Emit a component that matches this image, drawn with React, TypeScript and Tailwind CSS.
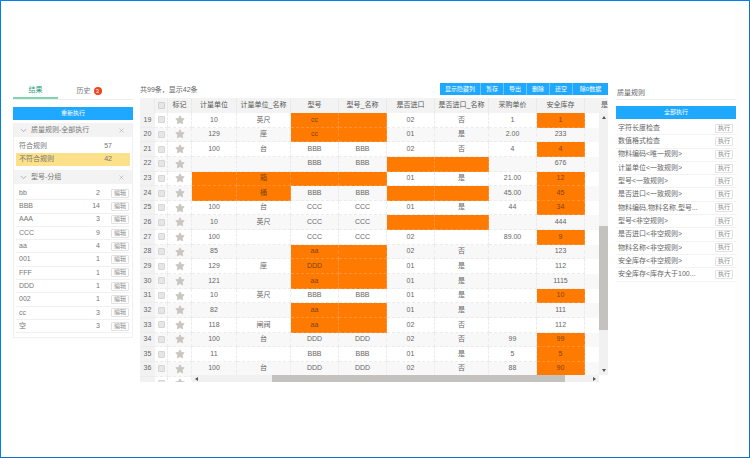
import { ChevronDown, Star, X } from "lucide-react";

const rowGrid = "grid grid-cols-[15px_13px_24px_45px_54px_48px_48px_48px_54px_48px_48px_23px]";

const headers = ["", "", "标记", "计量单位", "计量单位_名称", "型号", "型号_名称", "是否进口", "是否进口_名称", "采购单价", "安全库存"];

// "!" in front of a value marks the cell as failed (orange)
const rows: [number, ...string[]][] = [
  [19, "10", "英尺", "!cc", "!", "02", "否", "1", "!1"],
  [20, "129", "座", "!cc", "!", "01", "是", "2.00", "233"],
  [21, "100", "台", "BBB", "BBB", "02", "否", "4", "!4"],
  [22, "", "", "BBB", "BBB", "!", "!", "", "676"],
  [23, "!", "!箱", "!", "!", "01", "是", "21.00", "!12"],
  [24, "!", "!桶", "BBB", "BBB", "!", "!", "45.00", "!45"],
  [25, "100", "台", "CCC", "CCC", "01", "是", "44", "!34"],
  [26, "10", "英尺", "CCC", "CCC", "!", "!", "", "444"],
  [27, "100", "", "CCC", "CCC", "02", "", "89.00", "!9"],
  [28, "85", "", "!aa", "!", "02", "否", "", "123"],
  [29, "129", "座", "!DDD", "!", "01", "是", "", "112"],
  [30, "121", "", "!aa", "!", "01", "是", "", "1115"],
  [31, "10", "英尺", "BBB", "BBB", "01", "是", "", "!10"],
  [32, "82", "", "!aa", "!", "01", "是", "", "111"],
  [33, "118", "闸阀", "!aa", "!", "02", "否", "", "112"],
  [34, "100", "台", "DDD", "DDD", "02", "否", "99", "!99"],
  [35, "11", "", "BBB", "BBB", "01", "是", "5", "!5"],
  [36, "100", "台", "DDD", "DDD", "02", "否", "88", "!90"],
  [37, "", "", "", "", "", "", "", ""],
];

const groups: [string, number][] = [
  ["bb", 2],
  ["BBB", 14],
  ["AAA", 3],
  ["CCC", 9],
  ["aa", 4],
  ["001", 1],
  ["FFF", 1],
  ["DDD", 1],
  ["002", 1],
  ["cc", 3],
  ["空", 3],
];

const rules = [
  "字符长度检查",
  "数值格式检查",
  "物料编码<唯一规则>",
  "计量单位<一致规则>",
  "型号<一致规则>",
  "是否进口<一致规则>",
  "物料编码,物料名称,型号...",
  "型号<非空规则>",
  "是否进口<非空规则>",
  "物料名称<非空规则>",
  "安全库存<非空规则>",
  "安全库存<库存大于100...",
];

const actions = [
  { label: "显示隐藏列", width: "w-[41px]" },
  { label: "暂存", width: "w-[23px]" },
  { label: "导出", width: "w-[23px]" },
  { label: "删除", width: "w-[23px]" },
  { label: "还空", width: "w-[23px]" },
  { label: "除0数据", width: "w-[35px]" },
];

function SmallButton({ label }: { label: string }) {
  return (
    <span className="flex h-[9px] w-[18px] items-center justify-center rounded-[1px] border border-[#e2e2e2] bg-white text-[6px] text-[#888]">
      {label}
    </span>
  );
}

function PanelHeader({ title }: { title: string }) {
  return (
    <div className="flex h-[14px] items-center bg-[#f3f3f3] pl-[5px] pr-[7px] text-[7px] text-[#777]">
      <ChevronDown className="mr-[3px] h-[9px] w-[9px] text-[#999]" />
      <span className="flex-1">{title}</span>
      <X className="h-[7px] w-[7px] text-[#aaa]" />
    </div>
  );
}

function Cell({ value, even }: { value: string; even: boolean }) {
  const failed = value.startsWith("!");
  return (
    <div
      className={`flex items-center justify-center border-b border-r border-dashed ${
        failed
          ? "border-[#ff9238] bg-[#ff7a00] text-[#7a4510]"
          : even
            ? "border-[#ececec] bg-[#f8f8f8]"
            : "border-[#ececec] bg-white"
      }`}
    >
      {failed ? value.slice(1) : value}
    </div>
  );
}

function Table() {
  return (
    <div className="relative h-[284px] overflow-hidden bg-white text-[7px] text-[#666]">
      <div className={`${rowGrid} h-[15px] bg-[#f3f3f3] text-[#555]`}>
        {headers.map((h, i) => (
          <div key={i} className="flex items-center justify-center border-r border-[#eaeaea]">
            {i === 1 ? <span className="h-[7px] w-[7px] rounded-[1px] border border-[#d0d0d0] bg-[#e6e6e6]" /> : h}
          </div>
        ))}
        <div className="flex items-center justify-end overflow-hidden whitespace-nowrap">是</div>
      </div>
      {rows.map(([no, ...cells]) => {
        const even = no % 2 === 0;
        return (
          <div key={no} className={`${rowGrid} h-[14.65px]`}>
            <div className="flex items-center justify-center border-b border-[#ececec] bg-[#f2f2f2]">{no < 37 ? no : ""}</div>
            <div className={`flex items-center justify-center border-b border-r border-dashed border-[#ececec] ${even ? "bg-[#f8f8f8]" : "bg-white"}`}>
              <span className="h-[7px] w-[7px] rounded-[1px] border border-[#d6d6d6] bg-[#e6e6e6]" />
            </div>
            <div className={`flex items-center justify-center border-b border-r border-dashed border-[#ececec] ${even ? "bg-[#f8f8f8]" : "bg-white"}`}>
              <Star className="h-[10px] w-[10px] fill-[#c9c6c2] text-[#c9c6c2]" />
            </div>
            {cells.map((c, i) => (
              <Cell key={i} value={c} even={even} />
            ))}
            <div className={even ? "bg-[#f8f8f8]" : "bg-white"} />
          </div>
        );
      })}

      {/* vertical scrollbar */}
      <div className="absolute bottom-[7px] right-0 top-[15px] flex w-[9px] flex-col items-center bg-[#f1f1f1]">
        <span className="mt-[3px] h-0 w-0 border-x-[2px] border-b-[3px] border-x-transparent border-b-[#555]" />
        <div className="mt-[107px] h-[104px] w-full bg-[#c4c2be]" />
        <span className="mt-auto mb-[3px] h-0 w-0 border-x-[2px] border-t-[3px] border-x-transparent border-t-[#555]" />
      </div>

      {/* horizontal scrollbar */}
      <div className="absolute bottom-0 left-[52px] right-0 flex h-[7px] bg-white">
        <div className="flex w-[407px] items-center bg-[#f1f1f1]">
          <span className="ml-[3px] h-0 w-0 border-y-[2px] border-r-[3px] border-y-transparent border-r-[#555]" />
          <div className="ml-[74px] h-full w-[293px] bg-[#c4c2be]" />
          <span className="ml-auto mr-[3px] h-0 w-0 border-y-[2px] border-l-[3px] border-y-transparent border-l-[#555]" />
        </div>
      </div>
    </div>
  );
}

export default function App() {
  return (
    <div
      className="h-[458px] w-[750px] overflow-hidden border border-b-[#1070d0] border-l-[#0080f0] border-r-[#1070d0] border-t-[#0080f0] bg-white"
      style={{ fontFamily: '"Liberation Sans", "Noto Sans CJK SC", sans-serif' }}
    >
      <div className="flex pl-[12px] pt-[82px]">
        {/* left panel */}
        <div className="w-[120px] text-[7px] text-[#777]">
          <div className="flex h-[17px] border-b border-[#eee]">
            <div className="flex w-[45px] items-center justify-center border-b-2 border-[#7fd6ae] text-[#2a9d75]">结果</div>
            <div className="ml-[7px] flex w-[40px] items-center justify-center gap-[3px]">
              <span className="ml-[8px]">历史</span>
              <span className="flex h-[8px] w-[8px] items-center justify-center rounded-full bg-[#f0421c] text-[6px] text-white">3</span>
            </div>
          </div>
          <div className="mt-[7px] flex h-[13px] items-center justify-center bg-[#1fa8ff] text-[6px] text-white">重新执行</div>
          <div className="mt-[3px] border border-t-0 border-[#f0f0f0]">
            <PanelHeader title="质量规则-全部执行" />
            <div className="px-[2px] pb-[4px] pt-[3px]">
              <div className="flex h-[13px] items-center justify-between pl-[3px] pr-[18px]">
                <span>符合规则</span>
                <span>57</span>
              </div>
              <div className="flex h-[13px] items-center justify-between bg-[#fde08a] pl-[3px] pr-[18px]">
                <span>不符合规则</span>
                <span>42</span>
              </div>
            </div>
            <PanelHeader title="型号-分组" />
            <div className="px-[2px] pb-[4px] pt-[3px]">
              {groups.map(([name, count]) => (
                <div key={name} className="flex h-[13.3px] items-center border-b border-[#f0f0f0] pl-[3px] pr-[1px]">
                  <span className="flex-1">{name}</span>
                  <span className="mr-[11px]">{count}</span>
                  <SmallButton label="编辑" />
                </div>
              ))}
            </div>
          </div>
        </div>

        {/* table */}
        <div className="ml-[7px] w-[468px]">
          <div className="flex h-[15px] items-start justify-between">
            <span className="pt-[2px] text-[7px] text-[#666]">共99条，显示42条</span>
            <div className="flex h-[12px] bg-[#1fa8ff] text-[6px] text-white">
              {actions.map((a) => (
                <span key={a.label} className={`flex items-center justify-center border-r border-[#6cc6ff] last:border-r-0 ${a.width}`}>
                  {a.label}
                </span>
              ))}
            </div>
          </div>
          <Table />
        </div>

        {/* right panel */}
        <div className="ml-[8px] w-[120px] text-[7px] text-[#666]">
          <div className="flex h-[17px] items-center border-b border-[#eee] pl-[1px] pt-[4px]">质量规则</div>
          <div className="mt-[6px] flex h-[13px] items-center justify-center bg-[#1fa8ff] text-[6px] text-white">全部执行</div>
          <div className="mt-[3px]">
            {rules.map((rule) => (
              <div key={rule} className="flex h-[13.3px] items-center justify-between border-b border-[#f2f2f2] pl-[2px] pr-[3px]">
                <span className="truncate">{rule}</span>
                <SmallButton label="执行" />
              </div>
            ))}
          </div>
        </div>
      </div>
    </div>
  );
}
